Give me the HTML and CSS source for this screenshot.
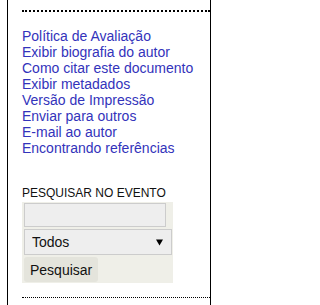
FILE: index.html
```html
<!DOCTYPE html>
<html lang="pt">
<head>
<meta charset="utf-8">
<title>Ferramentas</title>
<link rel="stylesheet" href="styles.css">
</head>
<body>
<div class="sidebar">
  <div class="block tools">
    <ul class="links">
      <li><a href="#">Política de Avaliação</a></li>
      <li><a href="#">Exibir biografia do autor</a></li>
      <li><a href="#">Como citar este documento</a></li>
      <li><a href="#">Exibir metadados</a></li>
      <li><a href="#">Versão de Impressão</a></li>
      <li><a href="#">Enviar para outros</a></li>
      <li><a href="#">E-mail ao autor</a></li>
      <li><a href="#">Encontrando referências</a></li>
    </ul>
    <div class="search-title">PESQUISAR NO EVENTO</div>
    <form class="search-panel">
      <input class="search-input" type="text" aria-label="Pesquisar">
      <div class="select-wrap">
        <select class="search-select" aria-label="Campo">
          <option>Todos</option>
        </select>
        <svg class="select-arrow" width="7" height="7" viewBox="0 0 7 7" aria-hidden="true"><polygon points="0,0.5 7,0.5 3.5,6.5" fill="#000"/></svg>
      </div>
      <button class="search-button" type="button">Pesquisar</button>
    </form>
  </div>
  <div class="block bottom"></div>
</div>
</body>
</html>
```
FILE: styles.css
```css
html, body {
  margin: 0;
  padding: 0;
  background: #ffffff;
}

body {
  font-family: "Liberation Sans", Arial, sans-serif;
}

.sidebar {
  margin-left: 7px;
  width: 202px;
  min-height: 305px;
  border-left: 1px solid #000;
  border-right: 1px solid #000;
  padding-top: 10px;
  box-sizing: content-box;
}

.block {
  margin-left: 14px;
}

.tools {
  border-top: 2px dotted #000;
  padding-top: 16px;
}

.links {
  list-style: none;
  margin: 0;
  padding: 0;
  font-size: 14px;
  line-height: 16px;
}

.links a {
  color: #3333bb;
  text-decoration: none;
}

.search-title {
  margin-top: 30px;
  font-size: 12px;
  line-height: 14px;
  color: #111;
}

.search-panel {
  margin: 2px 0 0 0;
  width: 148px;
  padding: 1px 1px 1px 2px;
  background: #efefe8;
  display: flex;
  flex-direction: column;
  align-items: flex-start;
  gap: 2px;
}

.search-input {
  box-sizing: border-box;
  width: 142px;
  height: 24px;
  margin: 0;
  padding: 0 4px;
  border: 1px solid #cccccc;
  background: #eeeeee;
  font: 14px "Liberation Sans", Arial, sans-serif;
  outline: none;
}

.select-wrap {
  position: relative;
  width: 148px;
  height: 26px;
}

.search-select {
  appearance: none;
  -webkit-appearance: none;
  box-sizing: border-box;
  width: 148px;
  height: 26px;
  margin: 0;
  padding: 0 0 0 7px;
  border: 1px solid #cccccc;
  border-radius: 0;
  background: #eeeeee;
  color: #111;
  font: 14px "Liberation Sans", Arial, sans-serif;
}

.select-arrow {
  position: absolute;
  left: 132px;
  top: 10px;
  pointer-events: none;
}

.search-button {
  box-sizing: border-box;
  height: 25px;
  margin: 0;
  padding: 0 6px;
  border: none;
  border-radius: 3px;
  background: #e4e4dc;
  color: #111;
  font: 14px "Liberation Sans", Arial, sans-serif;
}

.bottom {
  margin-top: 14px;
  border-top: 1px dotted #000;
}
```
